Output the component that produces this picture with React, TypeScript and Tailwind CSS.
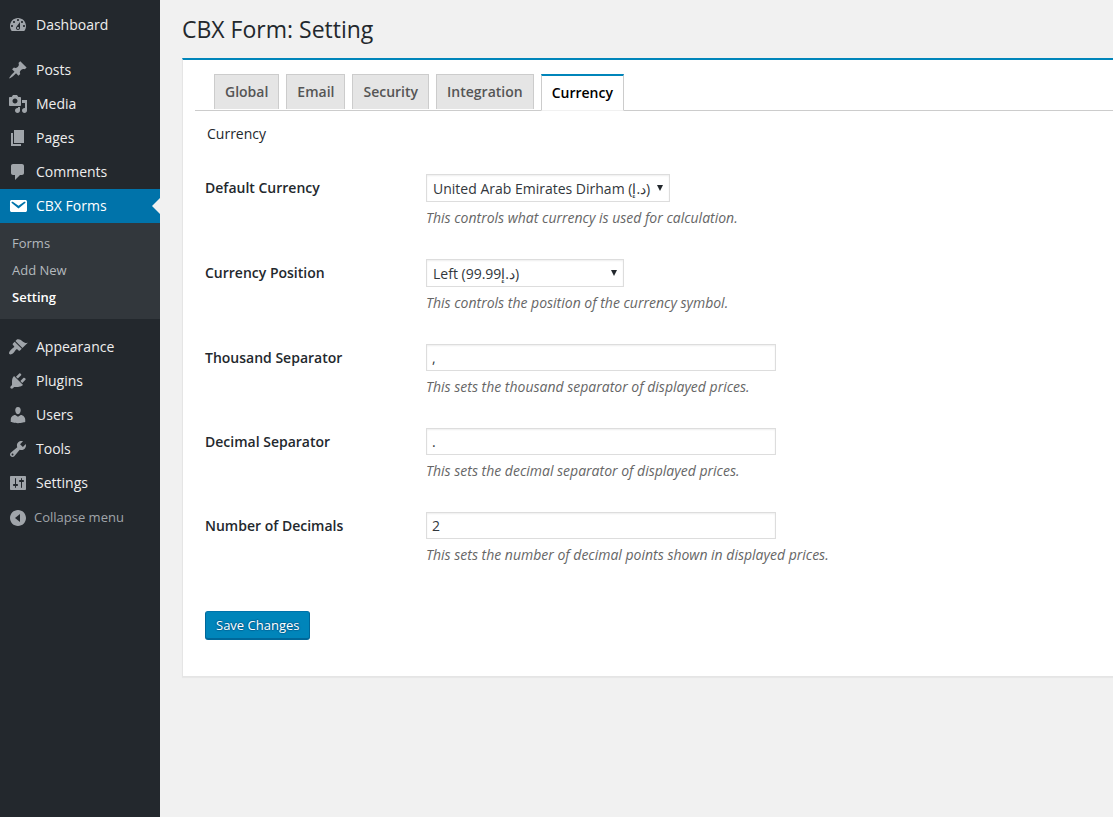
import { useState } from "react";
import type { ReactNode } from "react";

const icons = {
  dashboard:
    "M3.76 16h12.48c1.1-1.37 1.76-3.11 1.76-5 0-4.42-3.58-8-8-8s-8 3.58-8 8c0 1.89.66 3.63 1.76 5zM10 4c.55 0 1 .45 1 1s-.45 1-1 1-1-.45-1-1 .45-1 1-1zM6 6c.55 0 1 .45 1 1s-.45 1-1 1-1-.45-1-1 .45-1 1-1zm8 0c.55 0 1 .45 1 1s-.45 1-1 1-1-.45-1-1 .45-1 1-1zm-5.37 5.55L12 7v6c0 1.1-.9 2-2 2s-2-.9-2-2c0-.57.24-1.08.63-1.45zM4 10c.55 0 1 .45 1 1s-.45 1-1 1-1-.45-1-1 .45-1 1-1zm12 0c.55 0 1 .45 1 1s-.45 1-1 1-1-.45-1-1 .45-1 1-1zm-5 3c0-.55-.45-1-1-1s-1 .45-1 1 .45 1 1 1 1-.45 1-1z",
  post: "M10.44 3.02l1.82-1.82 6.36 6.35-1.83 1.82c-1.05-.68-2.48-.57-3.41.36l-.75.75c-.92.93-1.04 2.35-.35 3.41l-1.83 1.82-2.41-2.41-2.8 2.79c-.42.42-3.38 2.71-3.8 2.29s1.86-3.39 2.28-3.81l2.79-2.79L4.1 9.36l1.83-1.82c1.05.69 2.48.57 3.4-.36l.75-.75c.93-.92 1.05-2.35.36-3.41z",
  media:
    "M13 11V4c0-.55-.45-1-1-1h-1.67L9 1H5L3.67 3H2c-.55 0-1 .45-1 1v7c0 .55.45 1 1 1h10c.55 0 1-.45 1-1zM7 4.5c1.38 0 2.5 1.12 2.5 2.5S8.38 9.5 7 9.5 4.5 8.38 4.5 7 5.62 4.5 7 4.5zM14 6h5v10.5c0 1.38-1.12 2.5-2.5 2.5S14 17.88 14 16.5s1.12-2.5 2.5-2.5c.17 0 .34.02.5.05V9h-3V6zm-4 8.05V13h2v3.5c0 1.38-1.12 2.5-2.5 2.5S7 17.88 7 16.5 8.12 14 9.5 14c.17 0 .34.02.5.05z",
  page: "M6 15V2h10v13H6zm-1 1h8v2H3V5h2v11z",
  comments:
    "M5 2h9c1.1 0 2 .9 2 2v7c0 1.1-.9 2-2 2h-2l-5 5v-5H5c-1.1 0-2-.9-2-2V4c0-1.1.9-2 2-2z",
  email:
    "M3.87 4h13.25C18.37 4 19 4.59 19 5.79v8.42c0 1.19-.63 1.79-1.88 1.79H3.87c-1.25 0-1.88-.6-1.88-1.79V5.79c0-1.2.63-1.79 1.88-1.79zm6.62 8.6l6.74-5.53c.24-.2.43-.66.13-1.07-.29-.41-.82-.42-1.17-.17l-5.7 3.86L4.8 5.83c-.35-.25-.88-.24-1.17.17-.3.41-.11.87.13 1.07z",
  appearance:
    "M14.48 11.06L7.41 3.99l1.5-1.5c.5-.56 2.3-.47 3.51.32 1.21.8 1.43 1.28 2.91 2.1 1.18.64 2.45 1.26 4.45.85zm-.71.71L6.7 4.7 4.93 6.47c-.39.39-.39 1.02 0 1.41l1.06 1.06c.39.39.39 1.03 0 1.42-.6.6-1.43 1.11-2.21 1.69-.35.26-.7.53-1.01.84C1.43 14.23.4 16.08 1.4 17.07c.99 1 2.84-.03 4.18-1.36.31-.31.58-.66.85-1.02.57-.78 1.08-1.61 1.69-2.21.39-.39 1.02-.39 1.41 0l1.06 1.06c.39.39 1.02.39 1.41 0z",
  plugins:
    "M13.11 4.36L9.87 7.6 8 5.73l3.24-3.24c.35-.34 1.05-.2 1.56.32.52.51.66 1.21.31 1.55zm-8 1.77l.91-1.12 9.01 9.01-1.19.84c-.71.71-2.63 1.16-3.82 1.16H6.14L4.9 17.26c-.59.59-1.54.59-2.12 0-.59-.58-.59-1.53 0-2.12l1.24-1.24v-3.88c0-1.13.4-3.19 1.09-3.89zm7.26 3.97l3.24-3.24c.34-.35 1.04-.21 1.55.31.52.51.66 1.21.31 1.55l-3.24 3.25z",
  users:
    "M10 9.25c-2.27 0-2.73-3.44-2.73-3.44C7 4.02 7.82 2 9.97 2c2.16 0 2.98 2.02 2.71 3.81 0 0-.41 3.44-2.68 3.44zm0 2.57L12.72 10c2.39 0 4.52 2.33 4.52 4.53v2.49s-3.65 1.13-7.24 1.13c-3.65 0-7.24-1.13-7.24-1.13v-2.49c0-2.25 1.94-4.48 4.47-4.48z",
  tools:
    "M16.68 9.77c-1.34 1.34-3.3 1.67-4.95.99l-5.41 6.52c-.99.99-2.59.99-3.58 0s-.99-2.59 0-3.57l6.52-5.42c-.68-1.65-.35-3.61.99-4.95 1.28-1.28 3.12-1.62 4.72-1.06l-2.89 2.89 2.82 2.82 2.86-2.87c.53 1.58.18 3.39-1.08 4.65zM3.81 16.21c.4.39 1.04.39 1.43 0 .4-.4.4-1.04 0-1.43-.39-.4-1.03-.4-1.43 0-.39.39-.39 1.03 0 1.43z",
  settings:
    "M18 16V4c0-.55-.45-1-1-1H3c-.55 0-1 .45-1 1v12c0 .55.45 1 1 1h14c.55 0 1-.45 1-1zM8 11h1c.55 0 1 .45 1 1s-.45 1-1 1H8v1.5c0 .28-.22.5-.5.5s-.5-.22-.5-.5V13H6c-.55 0-1-.45-1-1s.45-1 1-1h1V5.5c0-.28.22-.5.5-.5s.5.22.5.5V11zm5-2h-1c-.55 0-1-.45-1-1s.45-1 1-1h1V5.5c0-.28.22-.5.5-.5s.5.22.5.5V7h1c.55 0 1 .45 1 1s-.45 1-1 1h-1v5.5c0 .28-.22.5-.5.5s-.5-.22-.5-.5V9z",
  collapse:
    "M10 2c4.42 0 8 3.58 8 8s-3.58 8-8 8-8-3.58-8-8 3.58-8 8-8zm2 12V6l-5 4z",
};

type IconName = keyof typeof icons;

function Icon({ name }: { name: IconName }) {
  return (
    <svg viewBox="0 0 20 20" className="h-5 w-5 shrink-0" fill="currentColor" fillRule="evenodd" aria-hidden="true">
      <path d={icons[name]} />
    </svg>
  );
}

function MenuItem({ icon, children }: { icon: IconName; children: ReactNode }) {
  return (
    <li>
      <a href="#" className="flex h-[34px] items-center gap-2 pl-2 text-sm text-[#eee]">
        <span className="text-[#a0a5aa]">
          <Icon name={icon} />
        </span>
        {children}
      </a>
    </li>
  );
}

function Sidebar() {
  return (
    <nav className="w-40 shrink-0 bg-[#23282d] pt-2">
      <ul>
        <MenuItem icon="dashboard">Dashboard</MenuItem>
      </ul>

      <ul className="mt-[11px]">
        <MenuItem icon="post">Posts</MenuItem>
        <MenuItem icon="media">Media</MenuItem>
        <MenuItem icon="page">Pages</MenuItem>
        <MenuItem icon="comments">Comments</MenuItem>
        <li>
          <a href="#" className="relative flex h-[34px] items-center gap-2 bg-[#0073aa] pl-2 text-sm text-white">
            <Icon name="email" />
            CBX Forms
            {/* Arrow pointing at the open page */}
            <span className="absolute top-1/2 right-0 -translate-y-1/2 border-8 border-l-0 border-transparent border-r-[#f1f1f1]" />
          </a>
          <ul className="bg-[#32373c] pt-[7px] pb-2 text-[13px] leading-[27px] text-[#b4b9be]">
            <li><a href="#" className="block px-3">Forms</a></li>
            <li><a href="#" className="block px-3">Add New</a></li>
            <li><a href="#" className="block px-3 font-semibold text-white">Setting</a></li>
          </ul>
        </li>
      </ul>

      <ul className="mt-[11px]">
        <MenuItem icon="appearance">Appearance</MenuItem>
        <MenuItem icon="plugins">Plugins</MenuItem>
        <MenuItem icon="users">Users</MenuItem>
        <MenuItem icon="tools">Tools</MenuItem>
        <MenuItem icon="settings">Settings</MenuItem>
      </ul>

      <button type="button" className="flex h-9 w-full items-center gap-[6px] pl-2 text-[13px] text-[#a0a5aa]">
        <Icon name="collapse" />
        Collapse menu
      </button>
    </nav>
  );
}

function Field({ id, label, help, children }: { id: string; label: string; help: string; children: ReactNode }) {
  return (
    <div className="flex">
      <label htmlFor={id} className="w-[221px] shrink-0 pt-1 text-sm font-semibold text-[#23282d]">
        {label}
      </label>
      <div className="min-w-0 flex-1">
        {children}
        <p className="mt-[6px] text-sm text-[#666] italic">{help}</p>
      </div>
    </div>
  );
}

function SelectBox({ id, width, options }: { id: string; width: string; options: string[] }) {
  return (
    <div className={`relative max-w-full ${width}`}>
      <select
        id={id}
        className="block h-7 w-full appearance-none border border-[#ddd] bg-white pt-[2px] pr-4 pl-[6px] text-sm text-[#32373c] shadow-[inset_0_1px_2px_rgba(0,0,0,0.07)]"
      >
        {options.map((option) => (
          <option key={option}>{option}</option>
        ))}
      </select>
      <svg viewBox="0 0 6 6" className="pointer-events-none absolute top-[11px] right-[7px] h-[6px] w-[6px]" aria-hidden="true">
        <path d="M0 0h6L3 6z" fill="#23282d" />
      </svg>
    </div>
  );
}

function TextBox({ id, value }: { id: string; value: string }) {
  return (
    <input
      id={id}
      type="text"
      defaultValue={value}
      className="block h-[27px] w-[350px] max-w-full border border-[#ddd] bg-white px-[5px] text-sm text-[#32373c] shadow-[inset_0_1px_2px_rgba(0,0,0,0.07)]"
    />
  );
}

const tabs = ["Global", "Email", "Security", "Integration", "Currency"];

export default function App() {
  const [active, setActive] = useState("Currency");

  return (
    <div className="flex min-h-screen bg-[#f1f1f1] font-['Open_Sans','Noto_Sans',sans-serif]">
      <Sidebar />

      <main className="min-w-0 flex-1 pl-[22px]">
        <h1 className="pt-[15px] pb-[14px] text-[23px] leading-[29px] text-[#23282d]">CBX Form: Setting</h1>

        <div className="border-t-2 border-b border-l border-t-[#0085ba] border-b-[#e5e5e5] border-l-[#e5e5e5] bg-white pt-[14px] pb-9 pl-3 shadow-[0_1px_1px_rgba(0,0,0,0.04)]">
          {/* Tabs */}
          <div role="tablist" className="flex items-start gap-[7px] border-b border-[#ccc] pl-[19px]">
            {tabs.map((tab) => (
              <button
                key={tab}
                type="button"
                role="tab"
                aria-selected={tab === active}
                onClick={() => setActive(tab)}
                className={
                  tab === active
                    ? "-mb-px h-[37px] border border-t-2 border-[#ccc] border-t-[#0085ba] border-b-[#f1f1f1] bg-white px-[10px] text-sm font-semibold text-black"
                    : "h-[35px] border border-b-0 border-[#ccc] bg-[#e5e5e5] px-[10px] text-sm font-semibold text-[#555]"
                }
              >
                {tab}
              </button>
            ))}
          </div>

          <h2 className="mt-[13px] pl-3 text-sm text-[#23282d]">{active}</h2>

          {/* Settings form */}
          <form className="mt-[30px] pl-[10px]" onSubmit={(e) => e.preventDefault()}>
            <div className="flex flex-col gap-[31px]">
              <Field id="currency" label="Default Currency" help="This controls what currency is used for calculation.">
                <SelectBox id="currency" width="w-[244px]" options={["United Arab Emirates Dirham (د.إ)"]} />
              </Field>
              <Field id="position" label="Currency Position" help="This controls the position of the currency symbol.">
                <SelectBox id="position" width="w-[198px]" options={["Left (99.99د.إ)"]} />
              </Field>
              <Field id="thousand" label="Thousand Separator" help="This sets the thousand separator of displayed prices.">
                <TextBox id="thousand" value="," />
              </Field>
              <Field id="decimal" label="Decimal Separator" help="This sets the decimal separator of displayed prices.">
                <TextBox id="decimal" value="." />
              </Field>
              <Field id="decimals" label="Number of Decimals" help="This sets the number of decimal points shown in displayed prices.">
                <TextBox id="decimals" value="2" />
              </Field>
            </div>

            <button
              type="submit"
              className="mt-[46px] block h-[29px] rounded-[3px] border border-b-2 border-[#006799] border-t-[#0073aa] bg-[#0085ba] px-[10px] pt-px text-[13px] text-white [text-shadow:0_-1px_1px_#006799,1px_0_1px_#006799,0_1px_1px_#006799,-1px_0_1px_#006799]"
            >
              Save Changes
            </button>
          </form>
        </div>
      </main>
    </div>
  );
}
